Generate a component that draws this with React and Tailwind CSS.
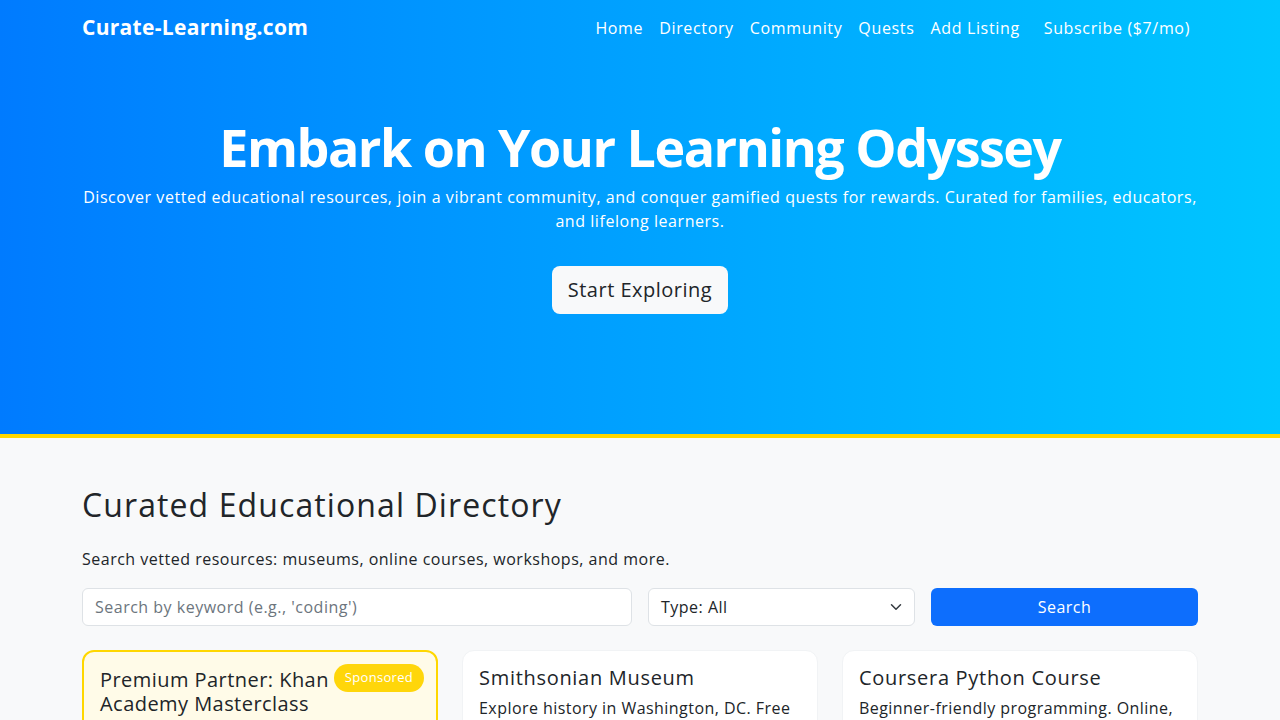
import React from "react";

const font = { fontFamily: '"Open Sans", "Noto Sans", sans-serif' };

function Nav() {
  const links = ["Home", "Directory", "Community", "Quests", "Add Listing"];
  return (
    <nav className="w-[1140px] mx-auto px-3 h-[56px] flex items-center justify-between">
      <a className="text-[21px] font-bold text-white tracking-[0.3px]">Curate-Learning.com</a>
      <ul className="flex items-center text-white text-[16px] tracking-[0.65px]">
        {links.map((l) => (
          <li key={l}>
            <a className="px-2 block">{l}</a>
          </li>
        ))}
        <li className="ml-2">
          <a className="px-2 block">Subscribe ($7/mo)</a>
        </li>
      </ul>
    </nav>
  );
}

function Hero() {
  return (
    <div className="w-[1140px] mx-auto px-3 pt-[59px] pb-[120px] text-center text-white">
      <h1 className="text-[52px] leading-[64px] font-bold tracking-[-1.5px]">Embark on Your Learning Odyssey</h1>
      <p className="mt-[6px] text-[16px] leading-[24px] tracking-[0.55px]">
        Discover vetted educational resources, join a vibrant community, and conquer gamified quests for rewards. Curated for families, educators,
        <br />
        and lifelong learners.
      </p>
      <button className="mt-[33px] h-[48px] px-4 rounded-lg bg-[#f8f9fa] text-[#212529] text-[20px] tracking-[0.5px]">
        Start Exploring
      </button>
    </div>
  );
}

function Card({ title, text, sponsored }) {
  return (
    <div
      className={
        sponsored
          ? "relative rounded-xl border-2 border-[#ffd700] bg-[#fffbe8] p-4 h-[120px]"
          : "relative rounded-xl border border-[#f1f3f5] bg-white px-4 pt-[15px] h-[120px]"
      }
    >
      {sponsored && (
        <span className="absolute top-3 right-3 h-[28px] px-[11px] flex items-center rounded-full bg-[#ffd60a] text-white text-[13px] tracking-[0.3px]">
          Sponsored
        </span>
      )}
      <h5
        className={
          "text-[20px] leading-[24px] font-medium text-[#212529] mb-[6px] " +
          (sponsored ? "pr-[86px] tracking-[0.45px]" : "tracking-[0.7px]")
        }
      >
        {title}
      </h5>
      <p className="text-[16px] leading-[24px] text-[#212529] tracking-[0.45px]">{text}</p>
    </div>
  );
}

export default function App() {
  return (
    <div className="min-h-screen bg-[#f8f9fa]" style={font}>
      <header className="bg-gradient-to-r from-[#007bff] to-[#00c6ff] border-b-4 border-[#ffd700]">
        <Nav />
        <Hero />
      </header>
      <section className="w-[1140px] mx-auto px-3 pt-[48px] pb-12">
        <h2 className="text-[32px] leading-[38px] text-[#212529] mb-[23px] tracking-[1.1px]">
          Curated Educational Directory
        </h2>
        <p className="text-[16px] leading-[24px] text-[#212529] mb-[17px] tracking-[0.5px]">
          Search vetted resources: museums, online courses, workshops, and more.
        </p>
        <div className="grid grid-cols-[1fr_267px_267px] gap-4 mb-6 tracking-[0.5px]">
          <input
            className="h-[38px] px-3 rounded-md border border-[#dee2e6] bg-white text-[16px] placeholder:text-[#6c757d] outline-none tracking-[0.5px]"
            placeholder="Search by keyword (e.g., 'coding')"
          />
          <div className="h-[38px] px-3 rounded-md border border-[#dee2e6] bg-white text-[16px] text-[#212529] flex items-center justify-between">
            <span>Type: All</span>
            <svg width="12" height="12" viewBox="0 0 16 16" fill="none" stroke="#343a40" strokeWidth="2" strokeLinecap="round" strokeLinejoin="round">
              <path d="M2 5l6 6 6-6" />
            </svg>
          </div>
          <button className="h-[38px] rounded-md bg-[#0d6efd] text-white text-[16px]">Search</button>
        </div>
        <div className="grid grid-cols-3 gap-6">
          <Card
            sponsored
            title="Premium Partner: Khan Academy Masterclass"
            text="Exclusive interactive courses in math, science and more for all ages."
          />
          <Card
            title="Smithsonian Museum"
            text="Explore history in Washington, DC. Free admission and family-friendly exhibits."
          />
          <Card
            title="Coursera Python Course"
            text="Beginner-friendly programming. Online, self-paced, with certificate."
          />
        </div>
      </section>
    </div>
  );
}
